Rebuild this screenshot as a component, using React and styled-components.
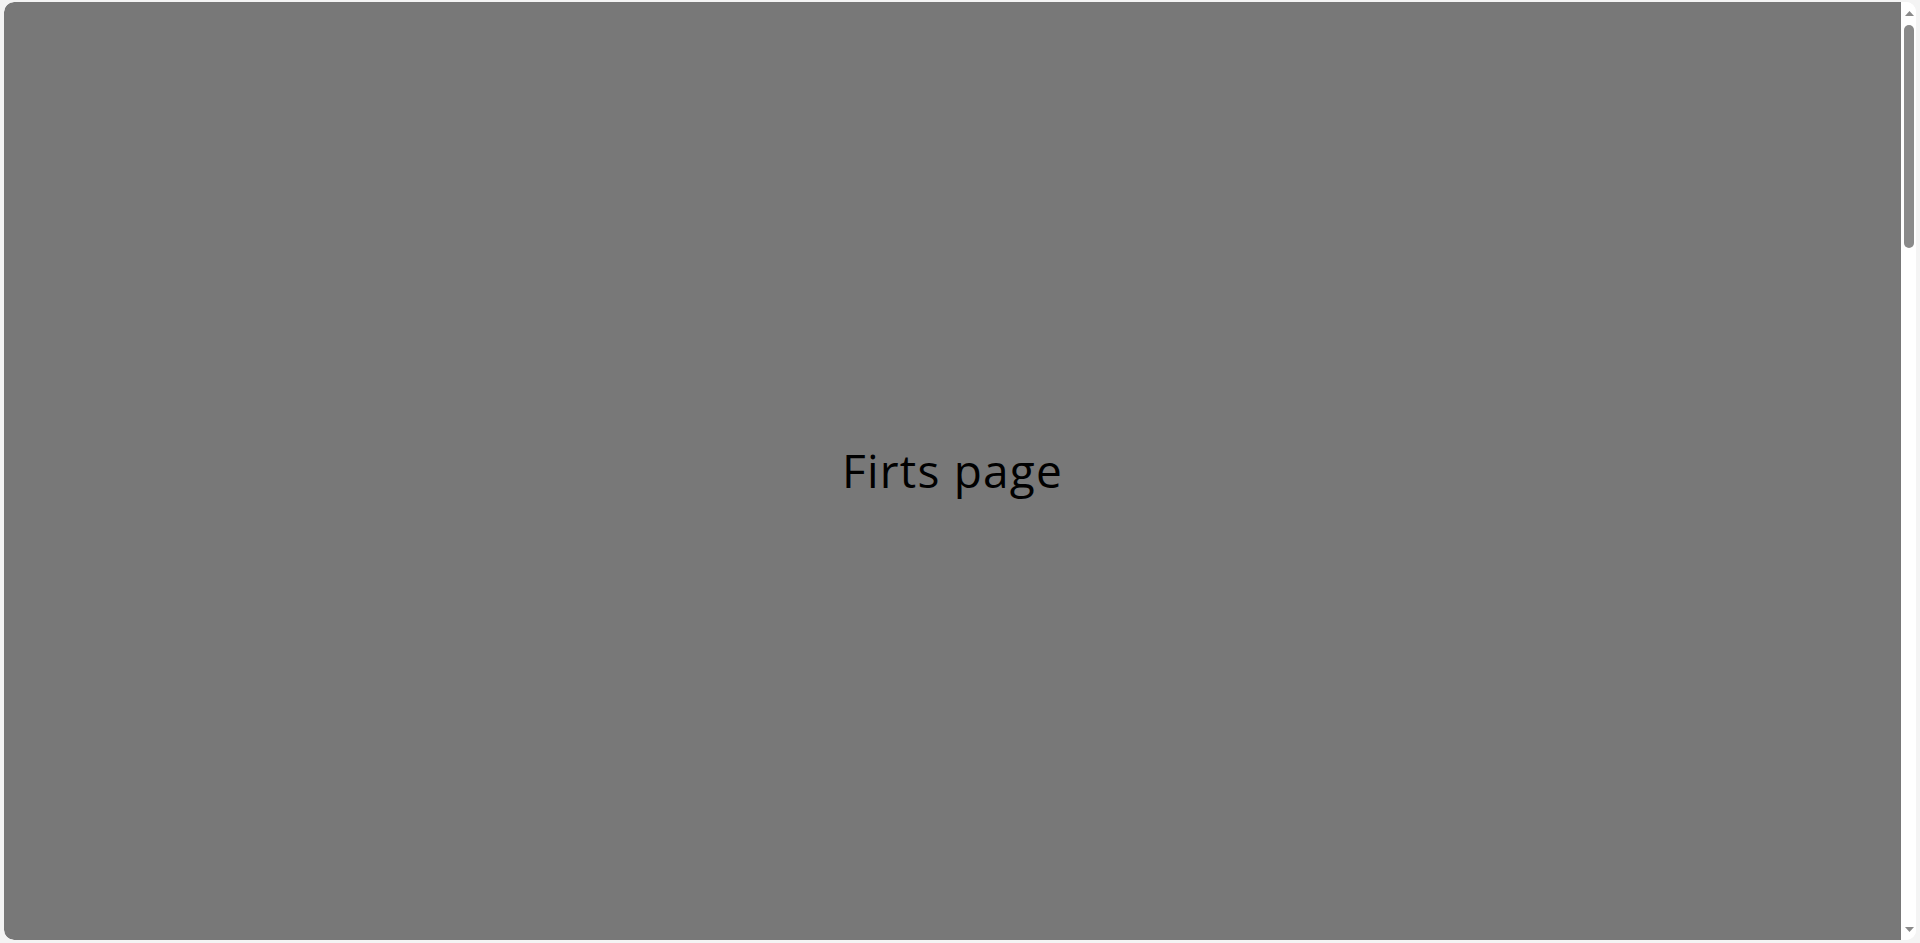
import React from "react";
import styled, { createGlobalStyle } from "styled-components";

const GlobalStyle = createGlobalStyle`
  html, body {
    margin: 0;
    padding: 0;
    height: 100%;
    background: #f4f4f4;
    overflow: hidden;
  }
  #root {
    height: 100%;
  }
`;

const Arrow = ({ dir }) => (
  <svg width="9" height="5" viewBox="0 0 9 5">
    <polygon
      points={dir === "up" ? "0,5 4.5,0 9,5" : "0,0 4.5,5 9,0"}
      fill="#8a8a8a"
    />
  </svg>
);

const App = () => {
  return (
    <>
      <GlobalStyle />
      <Shell>
        <Frame>
          <Page>
            <Title>Firts page</Title>
          </Page>
          <ScrollRail>
            <ArrowButton>
              <Arrow dir="up" />
            </ArrowButton>
            <Track>
              <Thumb />
            </Track>
            <ArrowButton>
              <Arrow dir="down" />
            </ArrowButton>
          </ScrollRail>
        </Frame>
      </Shell>
    </>
  );
};

const Shell = styled.div`
  height: 100%;
  box-sizing: border-box;
  padding: 2px 4px 3px 4px;
`;

const Frame = styled.main`
  height: 100%;
  display: flex;
  background: #ffffff;
  border-radius: 10px;
  overflow: hidden;
`;

const Page = styled.section`
  flex: 1;
  background: #787878;
  border-radius: 10px 0 0 10px;
  display: flex;
  align-items: center;
  justify-content: center;
`;

const Title = styled.h1`
  margin: 0 0 2px 0;
  font-family: "Open Sans", "Noto Sans", sans-serif;
  font-weight: 400;
  font-size: 46px;
  letter-spacing: 1.2px;
  color: #000000;
`;

const ScrollRail = styled.div`
  width: 15px;
  display: flex;
  flex-direction: column;
  background: #ffffff;
`;

const ArrowButton = styled.div`
  height: 22px;
  display: flex;
  align-items: center;
  justify-content: center;
  padding-left: 1px;
`;

const Track = styled.div`
  flex: 1;
  padding: 1px 2px 0 3px;
`;

const Thumb = styled.div`
  height: 223px;
  background: #8a8a8a;
  border-radius: 5px;
`;

export default App;
